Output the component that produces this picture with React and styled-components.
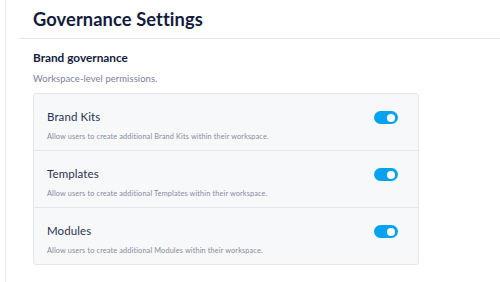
import styled, { createGlobalStyle } from 'styled-components';

const GlobalStyle = createGlobalStyle`
  body {
    margin: 0;
    background: #ffffff;
    font-family: Lato, "Liberation Sans", sans-serif;
  }
`;

const Page = styled.div`
  display: flex;
  height: 282px;
  overflow: hidden;
`;

const Rail = styled.div`
  width: 5px;
  flex-shrink: 0;
  border-right: 1px solid #eceef1;
`;

const Main = styled.main`
  flex: 1;
  padding-left: 13px;
`;

const Header = styled.header`
  height: 38px;
  padding-left: 14px;
  display: flex;
  align-items: center;
  border-bottom: 1px solid #e8eaed;
`;

const Title = styled.h1`
  margin: 0;
  font-size: 18.3px;
  font-weight: 700;
  color: #131b3d;
  letter-spacing: 0.1px;
`;

const Section = styled.section`
  padding: 11px 0 0 14px;
`;

const SectionTitle = styled.h2`
  margin: 0;
  font-size: 11.8px;
  font-weight: 700;
  color: #131b3d;
`;

const SectionSub = styled.p`
  margin: 8px 0 0;
  font-size: 9.4px;
  color: #7b8194;
  letter-spacing: 0.1px;
`;

const Card = styled.div`
  margin-top: 9px;
  width: 384px;
  background: #f7f8fa;
  border: 1px solid #e4e6ea;
  border-radius: 3px;
`;

const Row = styled.div`
  padding: 0 20px 0 13px;
  display: flex;
  align-items: flex-start;
  justify-content: space-between;
  border-top: ${(p) => (p.$first ? 'none' : '1px solid #e4e6ea')};
  box-sizing: border-box;
  height: ${(p) => (p.$first ? '56px' : '57px')};
`;

const RowText = styled.div`
  display: flex;
  flex-direction: column;
  padding-top: 16px;
`;

const RowTitle = styled.div`
  font-size: 11.5px;
  color: #2b3350;
  letter-spacing: 0.1px;
`;

const RowDesc = styled.div`
  margin-top: 9px;
  font-size: 7.3px;
  color: #868b9d;
  letter-spacing: 0.15px;
`;

const Toggle = styled.span`
  margin-top: 17px;
  width: 24px;
  height: 13px;
  border-radius: 7px;
  background: #06a2f0;
  display: flex;
  align-items: center;
  justify-content: flex-end;
  padding-right: 3px;
  box-sizing: border-box;

  &::after {
    content: '';
    width: 8px;
    height: 8px;
    border-radius: 50%;
    background: #ffffff;
  }
`;

const items = [
  { name: 'Brand Kits' },
  { name: 'Templates' },
  { name: 'Modules' },
];

function App() {
  return (
    <>
      <GlobalStyle />
      <Page>
        <Rail />
        <Main>
          <Header>
            <Title>Governance Settings</Title>
          </Header>
          <Section>
            <SectionTitle>Brand governance</SectionTitle>
            <SectionSub>Workspace-level permissions.</SectionSub>
            <Card>
              {items.map((item, i) => (
                <Row key={item.name} $first={i === 0}>
                  <RowText>
                    <RowTitle>{item.name}</RowTitle>
                    <RowDesc>
                      Allow users to create additional {item.name} within their workspace.
                    </RowDesc>
                  </RowText>
                  <Toggle />
                </Row>
              ))}
            </Card>
          </Section>
        </Main>
      </Page>
    </>
  );
}

export default App;
